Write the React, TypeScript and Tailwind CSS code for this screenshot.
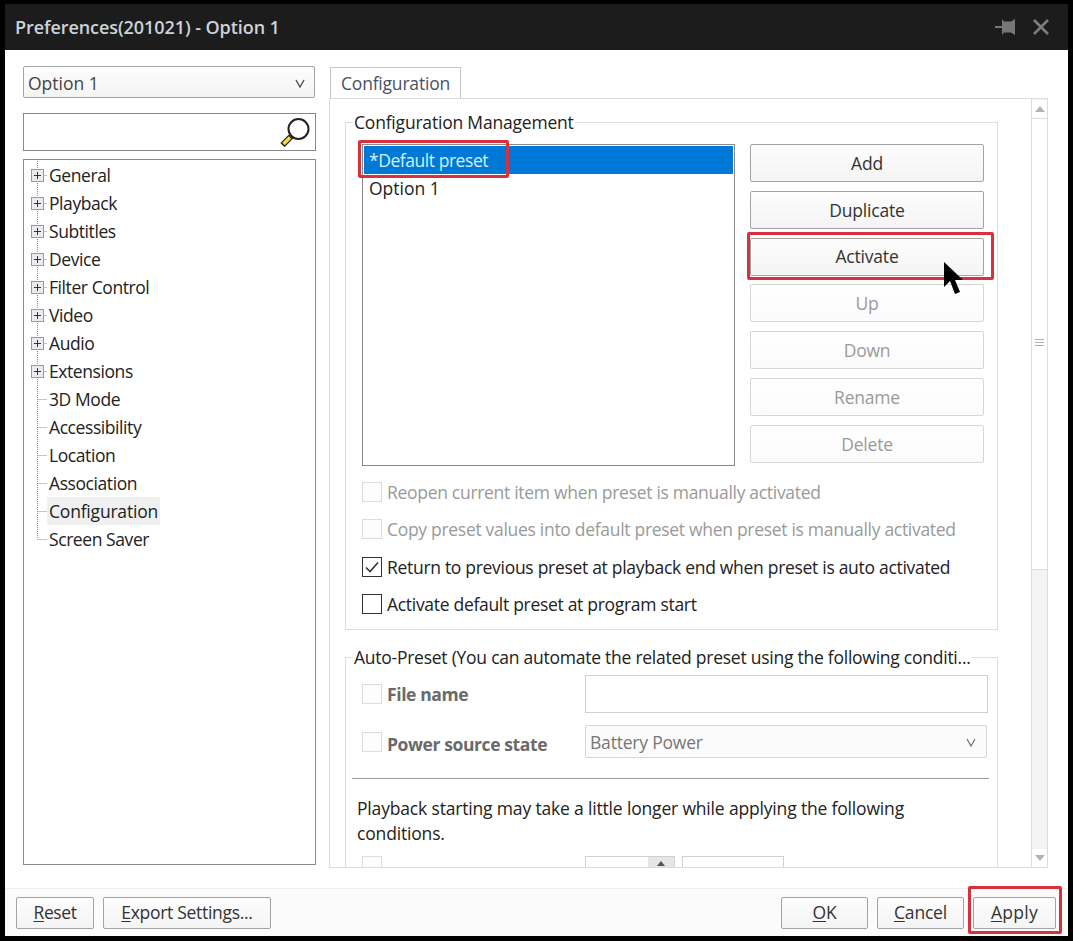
import React from "react";

function Btn({ label, disabled, u, rest, cls }: { label?: string; disabled?: boolean; u?: string; rest?: string; cls: string }) {
  return (
    <button
      className={`${cls} rounded-[2px] border bg-gradient-to-b from-[#fdfdfd] to-[#f4f4f4] text-[17.5px] leading-none ${
        disabled ? "border-[#d6d6d6] from-[#ffffff] to-[#fbfbfb] text-[#9a9a9a]" : "border-[#a3a3a3] text-[#333333]"
      }`}
    >
      {u ? <span className="underline underline-offset-2 decoration-1">{u}</span> : null}
      {rest ?? label}
    </button>
  );
}

function Chk({ checked, disabled }: { checked?: boolean; disabled?: boolean }) {
  return (
    <span
      className={`flex h-[20px] w-[20px] shrink-0 items-center justify-center border ${
        disabled ? "border-[#dcdcdc] bg-[#fdfdfd]" : "border-[#333333] bg-white"
      }`}
    >
      {checked ? (
        <svg width="16" height="14" viewBox="0 0 16 14" fill="none">
          <path d="M2 7.5 L6 11.5 L14 2.5" stroke="#333" strokeWidth="1.6" />
        </svg>
      ) : null}
    </span>
  );
}

function CheckRow({ text, checked, disabled }: { text: string; checked?: boolean; disabled?: boolean }) {
  return (
    <div className="flex h-[37.5px] items-center">
      <Chk checked={checked} disabled={disabled} />
      <span className={`ml-[5px] text-[17.5px] tracking-[-0.3px] ${disabled ? "text-[#9a9a9a]" : "text-[#222222]"}`}>{text}</span>
    </div>
  );
}

function TreeRow({ label, plus, last, sel }: { label: string; plus?: boolean; last?: boolean; sel?: boolean }) {
  return (
    <div className="flex h-[28px] items-center pl-[6px]">
      <svg width="17" height="28" viewBox="0 0 17 28" className="shrink-0">
        <line x1="7.5" y1={0} x2="7.5" y2={last ? 14 : 28} stroke="#8f8f8f" strokeDasharray="1 1" />
        <line x1="7.5" y1="14.5" x2="17" y2="14.5" stroke="#8f8f8f" strokeDasharray="1 1" />
        {plus ? (
          <g>
            <rect x="1.5" y="8.5" width="12" height="12" fill="#ececf0" stroke="#9a9aa0" />
            <path d="M4 14.5 H11 M7.5 11 V18" stroke="#333" />
          </g>
        ) : null}
      </svg>
      <span className={`px-[2px] text-[17.5px] leading-[28px] text-[#222222] ${sel ? "bg-[#f0f0f0] tracking-[-0.2px]" : "tracking-[-0.42px]"}`}>{label}</span>
    </div>
  );
}

function Caret({ cls }: { cls: string }) {
  return (
    <svg width="10" height="9" viewBox="0 0 10 9" fill="none" className={cls}>
      <path d="M1 1 L5 8 L9 1" stroke="currentColor" strokeWidth="1.3" />
    </svg>
  );
}

export default function App() {
  const tree: [string, boolean][] = [
    ["General", true], ["Playback", true], ["Subtitles", true], ["Device", true], ["Filter Control", true],
    ["Video", true], ["Audio", true], ["Extensions", true], ["3D Mode", false], ["Accessibility", false],
    ["Location", false], ["Association", false], ["Configuration", false], ["Screen Saver", false],
  ];
  const buttons: [string, boolean][] = [
    ["Add", false], ["Duplicate", false], ["Activate", false], ["Up", true], ["Down", true], ["Rename", true], ["Delete", true],
  ];
  return (
    <div className="relative flex h-[941px] w-[1073px] flex-col overflow-hidden bg-black pt-[4px] pr-[5px] pb-[5px] pl-[5px] font-['Open_Sans','Noto_Sans',sans-serif] tracking-[-0.2px]">
      {/* Title bar */}
      <div className="flex h-[46px] shrink-0 items-center justify-between bg-[#1c1c1c] pr-[18px] pl-[10px]">
        <span className="text-[18px] font-semibold tracking-[-0.07px] text-[#ccd3da]">Preferences(201021) - Option 1</span>
        <div className="flex items-center gap-[17px]">
          <svg width="20" height="18" viewBox="0 0 20 18">
            <path d="M0 9 H7" stroke="#777" strokeWidth="2" fill="none" />
            <path d="M7 1 L9 3.5 H16 L20 1 V17 L16 14.5 H9 L7 17 Z" fill="#777" />
          </svg>
          <svg width="18" height="16" viewBox="0 0 18 16">
            <path d="M2 1 L16 15 M16 1 L2 15" stroke="#7c7c7c" strokeWidth="2.6" />
          </svg>
        </div>
      </div>

      {/* Body */}
      <div className="flex min-h-0 flex-1 bg-white">
        {/* Left column */}
        <div className="ml-[18px] flex w-[293px] shrink-0 flex-col pt-[16px]">
          <div className="flex h-[32px] w-[292px] items-center justify-between rounded-[2px] border border-[#a3a3a3] bg-gradient-to-b from-[#fdfdfd] to-[#f4f4f4] pt-[2px] pr-[9px] pl-[4px] text-[17.5px] tracking-normal text-[#444444]">
            Option 1
            <Caret cls="text-[#444444]" />
          </div>
          <div className="mt-[15px] flex h-[38px] items-center justify-end border border-[#8a8a8a] bg-white pr-[5px]">
            <svg width="30" height="30" viewBox="0 0 30 30" fill="none">
              <circle cx="18.5" cy="12" r="10" fill="#fff" stroke="#222" strokeWidth="2" />
              <path d="M11 19.5 L2.5 28" stroke="#222" strokeWidth="6" />
              <path d="M10 20.5 L3.5 27" stroke="#f0e040" strokeWidth="3.6" />
            </svg>
          </div>
          <div className="mt-[8px] h-[706px] border border-[#8a8a8a] bg-white pt-[1px]">
            {tree.map(([l, p], i) => (
              <TreeRow key={l} label={l} plus={p} last={i === tree.length - 1} sel={l === "Configuration"} />
            ))}
          </div>
        </div>

        {/* Right column */}
        <div className="ml-[13px] flex w-[719px] shrink-0 flex-col pt-[17px]">
          <div className="ml-[1px] flex h-[31px] w-[131px] items-center justify-center border border-b-0 border-[#c4c4c4] bg-white pt-[1px] text-[17.5px] text-[#4a5068]">
            Configuration
          </div>
          <div className="flex h-[770px] overflow-hidden border border-[#dcdcdc] bg-white">
            <div className="w-[701px] shrink-0 overflow-hidden pt-[11px] pl-[15px]">
              <fieldset className="h-[520px] w-[653px] border border-[#dddddd] pr-0 pl-[16px]">
                <legend className="ml-[-9px] h-[24px] px-[1px] text-[17.5px] leading-[24px] text-[#222222]">Configuration Management</legend>
                <div className="flex pt-[10px]">
                  <div className="h-[322px] w-[373px] border border-[#8a8a8a] bg-white p-[1px]">
                    <div className="h-[28px] bg-[#0078d7] pl-[5px] text-[17.5px] leading-[28px] tracking-[-0.45px] text-[#d5f0ff]">*Default preset</div>
                    <div className="h-[28px] pl-[5px] text-[17.5px] leading-[28px] tracking-normal text-[#222222]">Option 1</div>
                  </div>
                  <div className="ml-[15px] flex w-[234px] flex-col gap-[8.8px]">
                    {buttons.map(([l, d]) => (
                      <Btn key={l} label={l} disabled={d} cls="h-[38px] w-full pt-[1px]" />
                    ))}
                  </div>
                </div>
                <div className="mt-[7px]">
                  <CheckRow disabled text="Reopen current item when preset is manually activated" />
                  <CheckRow disabled text="Copy preset values into default preset when preset is manually activated" />
                  <CheckRow checked text="Return to previous preset at playback end when preset is auto activated" />
                  <CheckRow text="Activate default preset at program start" />
                </div>
              </fieldset>

              <fieldset className="mt-[15px] h-[300px] w-[653px] border border-[#dddddd] pl-[6px]">
                <legend className="ml-[1px] h-[24px] px-[1px] text-[17.5px] leading-[24px] tracking-[-0.25px] text-[#222222]">
                  Auto-Preset (You can automate the related preset using the following conditi...
                </legend>
                <div className="flex items-center pt-[6px] pl-[10px]">
                  <Chk disabled />
                  <span className="ml-[5px] w-[198px] pt-[1px] text-[17.5px] font-bold tracking-[-0.4px] text-[#6a6a6a]">File name</span>
                  <div className="h-[38px] w-[403px] border border-[#d0d0d0] bg-white" />
                </div>
                <div className="mt-[12px] flex items-center pl-[10px]">
                  <Chk disabled />
                  <span className="ml-[5px] w-[198px] pt-[5px] text-[17.5px] font-bold tracking-[-0.4px] text-[#6a6a6a]">Power source state</span>
                  <div className="flex h-[33px] w-[402px] items-center justify-between rounded-[2px] border border-[#d6d6d6] bg-[#fbfbfb] pt-[1px] pr-[10px] pl-[4px] text-[17.5px] text-[#777777]">
                    Battery Power
                    <Caret cls="text-[#777777]" />
                  </div>
                </div>
                <div className="mt-[20px] h-px w-[637px] bg-[#9a9a9a]" />
                <p className="mt-[17px] ml-[5px] w-[570px] text-[17.5px] leading-[25px] tracking-[-0.17px] text-[#222222]">
                  Playback starting may take a little longer while applying the following conditions.
                </p>
                <div className="mt-[10px] flex pl-[10px]">
                  <Chk disabled />
                  <div className="ml-[203px] flex h-[24px] w-[90px] justify-end border border-[#d0d0d0]">
                    <div className="flex h-[22px] w-[26px] justify-center bg-[#e6e6e6] pt-[4px]">
                      <svg width="8" height="5" viewBox="0 0 8 5"><path d="M4 0 L8 5 H0 Z" fill="#555" /></svg>
                    </div>
                  </div>
                  <div className="ml-[7px] h-[24px] w-[102px] border border-[#d0d0d0]" />
                </div>
              </fieldset>
            </div>
            {/* Scrollbar */}
            <div className="ml-0 flex h-full w-[17px] shrink-0 flex-col border-r border-l border-[#dcdcdc] bg-[#f3f3f3] pt-px">
              <div className="flex h-[18px] items-center justify-center bg-white">
                <svg width="10" height="6" viewBox="0 0 10 6"><path d="M5 0 L10 6 H0 Z" fill="#b4b4b4" /></svg>
              </div>
              <div className="flex h-[452px] items-center justify-center border-t border-b border-[#dcdcdc] bg-white pb-[4px]">
                <div className="flex flex-col gap-[2px]">
                  <div className="h-px w-[9px] bg-[#b0b0b0]" />
                  <div className="h-px w-[9px] bg-[#b0b0b0]" />
                  <div className="h-px w-[9px] bg-[#b0b0b0]" />
                </div>
              </div>
              <div className="flex-1" />
              <div className="flex h-[18px] items-center justify-center bg-white">
                <svg width="10" height="6" viewBox="0 0 10 6"><path d="M5 6 L10 0 H0 Z" fill="#b4b4b4" /></svg>
              </div>
            </div>
          </div>
        </div>
      </div>

      {/* Footer */}
      <div className="flex h-[48px] shrink-0 items-center border-t border-[#eeeeee] bg-[#fbfbfb] pt-[1px] pr-[12px] pl-[11px]">
        <Btn u="R" rest="eset" cls="h-[32px] w-[78px] tracking-[-0.4px]" />
        <Btn u="E" rest="xport Settings..." cls="ml-[9px] h-[32px] w-[168px] tracking-[-0.3px]" />
        <div className="flex-1" />
        <Btn u="O" rest="K" cls="h-[32px] w-[87px]" />
        <Btn u="C" rest="ancel" cls="ml-[9px] h-[32px] w-[87px]" />
        <Btn u="A" rest="pply" cls="ml-[9px] h-[32px] w-[83px] tracking-[0.3px]" />
      </div>

      {/* Annotations */}
      <div className="absolute top-[140px] left-[358px] h-[38px] w-[151px] rounded-[2px] border-[3px] border-[#d9303f]" />
      <div className="absolute top-[232px] left-[747px] h-[48px] w-[247px] rounded-[2px] border-[3px] border-[#d9303f]" />
      <div className="absolute top-[886px] left-[968px] h-[48px] w-[94px] rounded-[2px] border-[3px] border-[#d9303f]" />
      <svg width="22" height="36" viewBox="0 0 22 36" className="absolute top-[261px] left-[943px]">
        <path d="M1 1 V26 L7 20 L12 33 L17 31 L12 19 L20 19 Z" fill="#000" />
      </svg>
    </div>
  );
}
